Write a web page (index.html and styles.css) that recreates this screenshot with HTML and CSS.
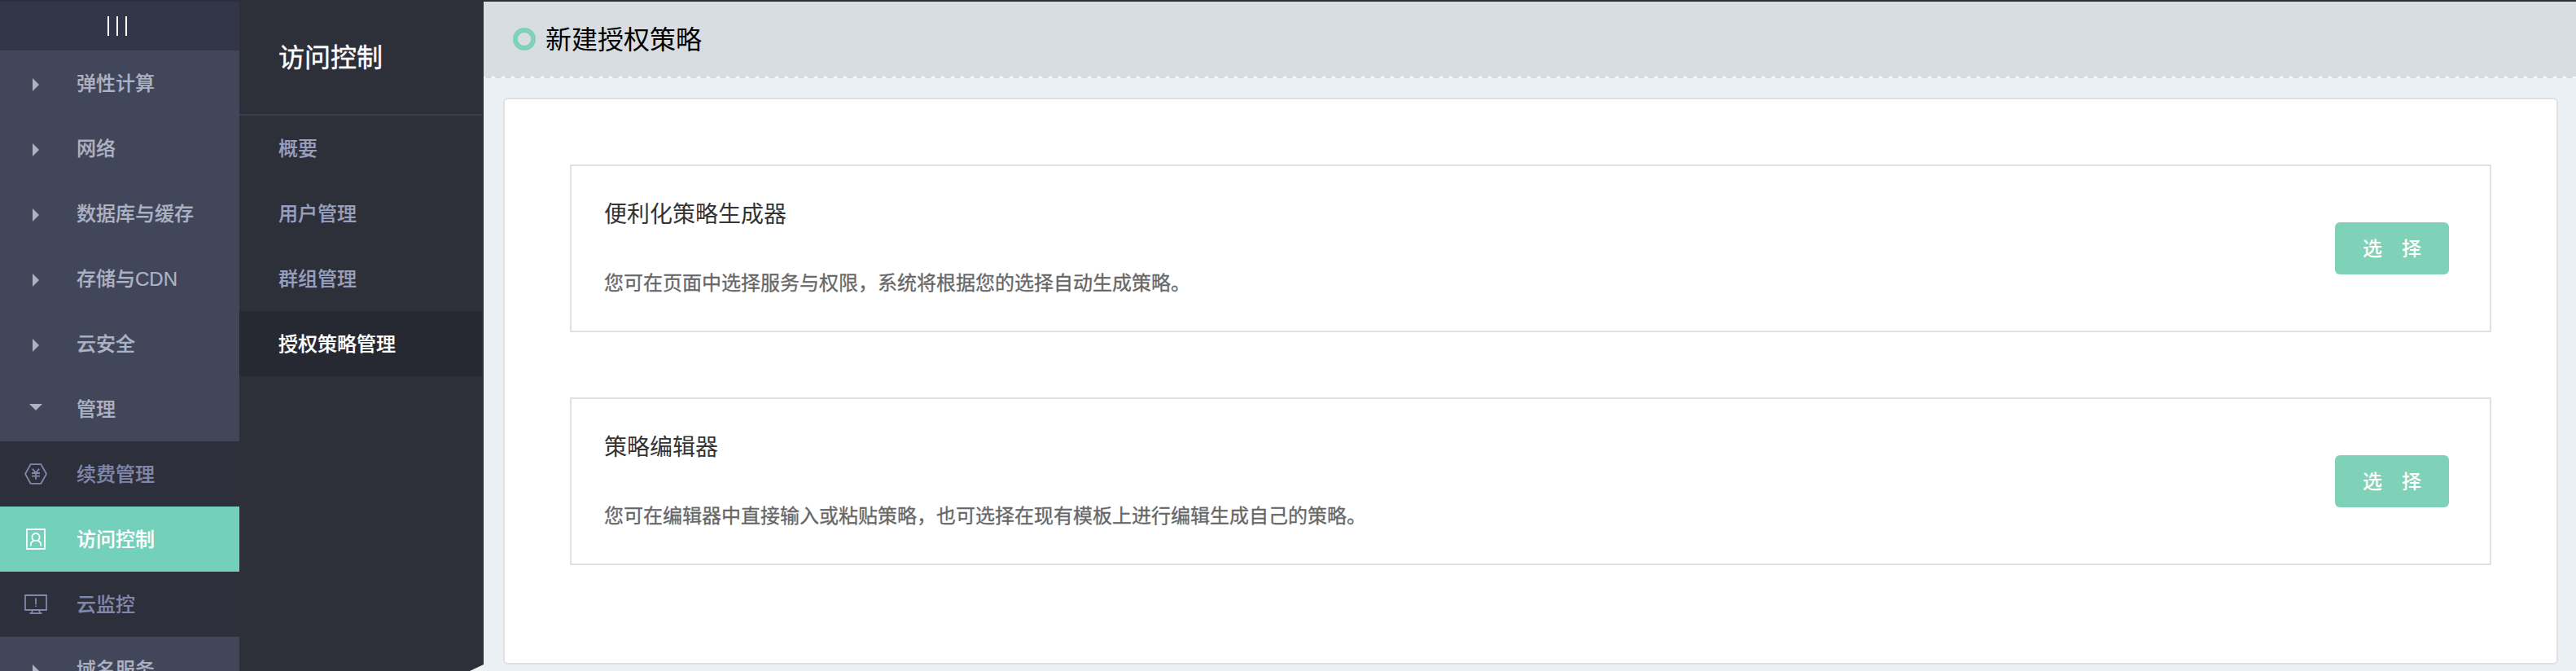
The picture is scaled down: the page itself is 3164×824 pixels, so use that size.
FILE: index.html
```html
<!DOCTYPE html>
<html lang="zh-CN">
<head>
<meta charset="utf-8">
<title>访问控制</title>
<link rel="stylesheet" href="styles.css">
</head>
<body>
<div class="app">
  <nav class="sidebar">
    <div class="toggle"><i></i><i></i><i></i></div>
    <a class="item"><span class="slot"><b class="right"></b></span><span class="label">弹性计算</span></a>
    <a class="item"><span class="slot"><b class="right"></b></span><span class="label">网络</span></a>
    <a class="item"><span class="slot"><b class="right"></b></span><span class="label">数据库与缓存</span></a>
    <a class="item"><span class="slot"><b class="right"></b></span><span class="label">存储与CDN</span></a>
    <a class="item"><span class="slot"><b class="right"></b></span><span class="label">云安全</span></a>
    <a class="item"><span class="slot"><b class="down"></b></span><span class="label">管理</span></a>
    <a class="item sub"><span class="slot">
      <svg class="icon" viewBox="0 0 32 32"><path d="M9.6 4.2H22.4L29 16 22.4 27.8H9.6L3 16Z"/><path d="M11.8 9.7L16 14.6 20.2 9.7M16 14.6V22.8M11 15H21M11 18.6H21"/></svg>
    </span><span class="label">续费管理</span></a>
    <a class="item sub active"><span class="slot">
      <svg class="icon" viewBox="0 0 32 32"><path d="M5 4H27V28H5Z"/><circle cx="16" cy="13.6" r="4.6"/><path d="M9.8 24.4V23C9.8 20.4 11 19 13.4 17.6M22.2 24.4V23C22.2 20.4 21 19 18.6 17.6"/></svg>
    </span><span class="label">访问控制</span></a>
    <a class="item sub"><span class="slot">
      <svg class="icon" viewBox="0 0 32 32"><path d="M3 5H29V23H3ZM12.4 23L10.6 27M19.6 23L21.4 27M8.4 27.2H23.6M16 8.4V16.2M16 17.6V19"/></svg>
    </span><span class="label">云监控</span></a>
    <a class="item"><span class="slot"><b class="right"></b></span><span class="label">域名服务</span></a>
  </nav>
  <nav class="submenu">
    <h2 class="submenu-title">访问控制</h2>
    <a class="entry">概要</a>
    <a class="entry">用户管理</a>
    <a class="entry">群组管理</a>
    <a class="entry current">授权策略管理</a>
    <svg class="corner" viewBox="0 0 17 8"><path d="M0 8L17 0V8Z"/></svg>
  </nav>
  <main class="main">
    <header class="header"><span class="ring"></span><h1 class="title">新建授权策略</h1></header>
    <div class="dashes"></div>
    <section class="panel">
      <article class="card">
        <div>
          <h3 class="card-title">便利化策略生成器</h3>
          <p class="card-text">您可在页面中选择服务与权限，系统将根据您的选择自动生成策略。</p>
        </div>
        <button class="button">选&emsp;择</button>
      </article>
      <article class="card">
        <div>
          <h3 class="card-title">策略编辑器</h3>
          <p class="card-text">您可在编辑器中直接输入或粘贴策略，也可选择在现有模板上进行编辑生成自己的策略。</p>
        </div>
        <button class="button">选&emsp;择</button>
      </article>
    </section>
  </main>
</div>
</body>
</html>
```
FILE: styles.css
```css
* { box-sizing: border-box; }
body {
  margin: 0;
  height: 824px;
  overflow: hidden;
  font-family: "Liberation Sans", "Noto Sans CJK SC", sans-serif;
  font-size: 24px;
  background: #ebf0f4;
}
h1, h2, h3, p { margin: 0; font-weight: 400; }
.app { display: flex; height: 824px; border-top: 2px solid #2d2f39; }

.sidebar { width: 294px; height: 822px; overflow: hidden; background: #42465a; }
.toggle { display: flex; justify-content: center; align-items: center; gap: 9px; height: 60px; padding-right: 6px; background: #333549; }
.toggle i { width: 2px; height: 24px; background: #fff; }
.item { display: flex; align-items: center; height: 80px; padding-bottom: 1px; color: #adb2c3; font-weight: 500; }
.label { padding-bottom: 3px; -webkit-text-stroke: 0.2px currentColor; }
.slot { display: flex; justify-content: center; width: 88px; margin-right: 6px; }
.right { border: 8px solid transparent; border-right: 0; border-left-color: #adb2c3; margin-top: 5px; }
.down { border: 8px solid transparent; border-bottom: 0; border-top-color: #adb2c3; margin-bottom: 3px; }
.sub { background: #2d2f3a; color: #8087ab; }
.active { background: #73d1bb; color: #fff; }
.icon { width: 32px; height: 32px; fill: none; stroke: currentColor; stroke-width: 1.8; }

.submenu { position: relative; width: 300px; padding-right: 2px; background: #2d3039; }
.submenu-title { display: flex; align-items: center; height: 140px; padding: 0 0 6px 48px; border-bottom: 2px solid #3b3d4c; color: #fff; font-size: 32px; -webkit-text-stroke: 0.4px currentColor; }
.entry { display: flex; align-items: center; height: 80px; padding: 0 0 4px 48px; color: #989fbe; font-weight: 500; -webkit-text-stroke: 0.2px currentColor; }
.current { background: #262931; color: #fff; }
.corner { position: absolute; right: 0; bottom: 0; width: 17px; height: 8px; fill: #f1f1ef; }

.main { flex: 1; }
.header { display: flex; align-items: center; gap: 12px; height: 92px; padding-left: 36px; background: #d8dde1; }
.ring { width: 28px; height: 28px; border: 6px solid #7fd1b8; border-radius: 50%; }
.title { padding-top: 2px; color: #000; font-size: 32px; line-height: 40px; }
.dashes { height: 2px; background: repeating-linear-gradient(90deg, #f5f7f9 0 2px, #d5d9e2 3px 9px, #f5f7f9 10px 12px); }
.panel { display: flex; flex-direction: column; gap: 80px; height: 696px; margin: 24px 22px 0 24px; padding: 80px; border: 2px solid #dde1e5; border-radius: 6px; background: #fff; }
.card { display: flex; justify-content: space-between; align-items: center; height: 206px; padding: 0 50px 0 40px; border: 2px solid #dce2e7; }
.card-title { height: 44px; color: #333; font-size: 28px; line-height: 44px; }
.card-text { height: 40px; margin: 42px 0 1px; color: #666; line-height: 40px; -webkit-text-stroke: 0.3px currentColor; }
.button { width: 140px; height: 64px; padding: 0 0 3px; border: 0; border-radius: 6px; background: #7fd1b8; color: #fff; font: 500 24px "Noto Sans CJK SC", sans-serif; }
```
